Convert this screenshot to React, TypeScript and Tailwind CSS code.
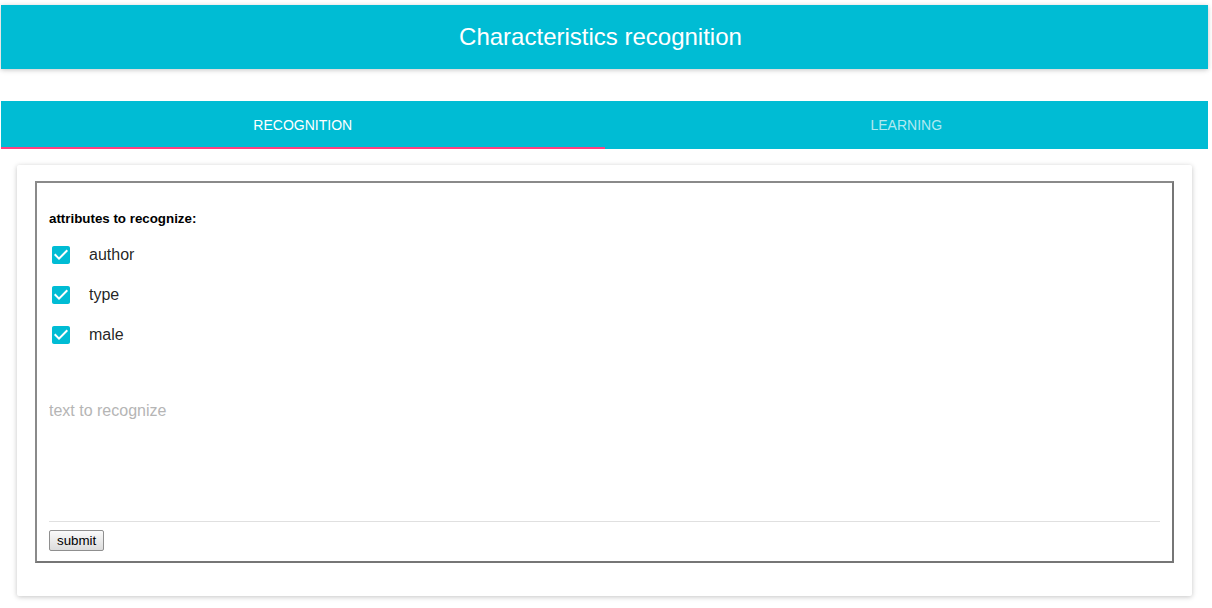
import { useState } from 'react';

const attributes = ['author', 'type', 'male'];

function Checkbox({ checked }: { checked: boolean }) {
  return checked ? (
    <svg width="24" height="24" viewBox="0 0 24 24" fill="#00bcd4">
      <path d="M19 3H5c-1.11 0-2 .9-2 2v14c0 1.1.89 2 2 2h14c1.11 0 2-.9 2-2V5c0-1.1-.89-2-2-2zm-9 14l-5-5 1.41-1.41L10 14.17l7.59-7.59L19 8l-9 9z" />
    </svg>
  ) : (
    <svg width="24" height="24" viewBox="0 0 24 24" fill="rgba(0,0,0,0.54)">
      <path d="M19 5v14H5V5h14m0-2H5c-1.1 0-2 .9-2 2v14c0 1.1.9 2 2 2h14c1.1 0 2-.9 2-2V5c0-1.1-.9-2-2-2z" />
    </svg>
  );
}

export default function App() {
  const [tab, setTab] = useState(0);
  const [checked, setChecked] = useState([true, true, true]);

  return (
    <div className="min-h-[608px] bg-white font-['Liberation_Sans',Arial,sans-serif] pt-[5px] pl-[1px] pr-[4px]">
      {/* App bar */}
      <header className="h-16 bg-[#00bcd4] flex items-center justify-center pr-2 shadow-[0_1px_6px_rgba(0,0,0,0.12),0_1px_4px_rgba(0,0,0,0.12)]">
        <h1 className="text-white text-[24px] leading-none">Characteristics recognition</h1>
      </header>

      {/* Tabs */}
      <div className="relative mt-8 bg-[#00bcd4]">
        <div className="flex h-12">
          {['RECOGNITION', 'LEARNING'].map((t, i) => (
            <button
              key={t}
              onClick={() => setTab(i)}
              className={'flex-1 text-[14px] ' + (tab === i ? 'text-white' : 'text-white/70')}
            >
              {t}
            </button>
          ))}
        </div>
        <div
          className={
            'absolute bottom-0 h-[2px] w-1/2 bg-[#ff4081] ' + (tab === 0 ? 'left-0' : 'left-1/2')
          }
        />
      </div>

      {/* Card */}
      <div className="mx-4 mt-4 bg-white rounded-[2px] shadow-[0_1px_6px_rgba(0,0,0,0.12),0_1px_4px_rgba(0,0,0,0.12)] px-[18px] pt-4 pb-[33px]">
        <form className="border-2 border-[#767676] border-t-[#8a8a8a] border-l-[#8a8a8a] px-3 pt-[28px] pb-[9px]">
          <div className="text-[13.33px] font-bold text-black leading-[16px]">attributes to recognize:</div>
          <div className="mt-2">
            {attributes.map((a, i) => (
              <label
                key={a}
                className="h-10 flex items-center cursor-pointer"
                onClick={() => setChecked(c => c.map((v, j) => (j === i ? !v : v)))}
              >
                <Checkbox checked={checked[i]} />
                <span className="ml-4 text-[16px] text-black/[0.87]">{a}</span>
              </label>
            ))}
          </div>
          <textarea
            placeholder="text to recognize"
            className="mt-[47px] block w-full h-[120px] resize-none outline-none text-[16px] leading-[18px] text-black/[0.87] placeholder:text-[#b5b5b5] border-b border-[#e0e0e0]"
          />
          <button
            type="button"
            className="mt-2 h-[21px] px-[7px] text-[13.33px] text-black rounded-[2px] border border-[#8f8f8f] bg-gradient-to-b from-[#fafafa] to-[#dcdcdc] leading-none"
          >
            submit
          </button>
        </form>
      </div>
    </div>
  );
}
